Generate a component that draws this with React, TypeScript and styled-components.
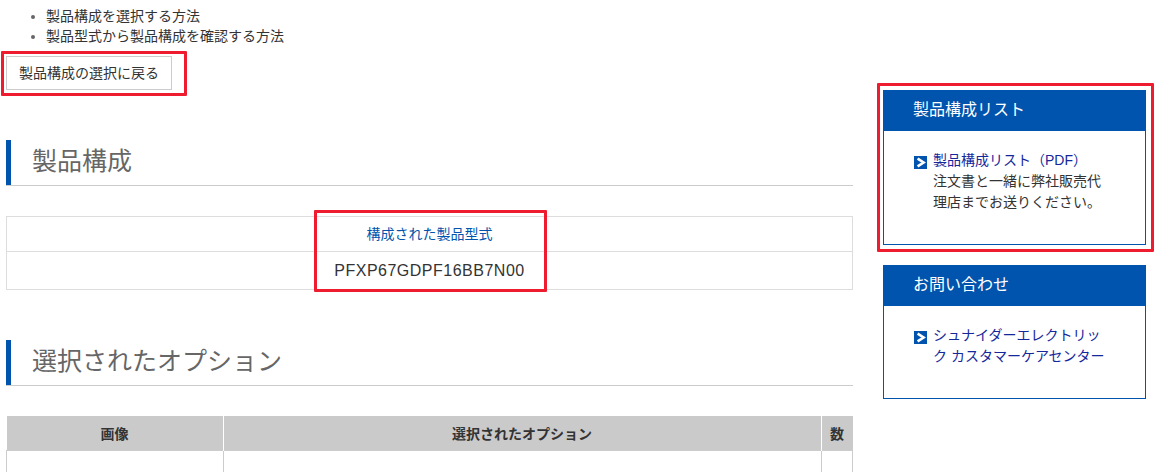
import React from "react";
import styled, { createGlobalStyle } from "styled-components";

const FONT = `"Liberation Sans", "Noto Sans CJK JP", sans-serif`;
const BLUE = "#0054ad";
const RED = "#ee1c2e";

const Global = createGlobalStyle`
  html, body {
    margin: 0;
    height: 472px;
    overflow: hidden;
    background: #ffffff;
  }
  body {
    font-family: ${FONT};
    font-size: 14px;
    color: #333333;
  }
`;

const Page = styled.div`
  display: flex;
  gap: 30px;
  padding-left: 6px;
`;
const Main = styled.main`
  width: 847px;
  flex: none;
  padding-top: 6px;
`;
const Side = styled.aside`
  width: 263px;
  flex: none;
  margin-top: 90px;
  display: flex;
  flex-direction: column;
  gap: 20px;
`;
const Methods = styled.ul`
  margin: 0 0 10px;
  padding-left: 40px;
  line-height: 20px;
  li::marker {
    color: #666666;
  }
`;
const Marked = styled.div<{ $fit?: boolean }>`
  position: relative;
  ${(p) => (p.$fit ? "width: fit-content;" : "")}
`;
const RedFrame = styled.span<{ $t: number; $r: number; $b: number; $l: number }>`
  position: absolute;
  top: ${(p) => p.$t}px;
  right: ${(p) => p.$r}px;
  bottom: ${(p) => p.$b}px;
  left: ${(p) => p.$l}px;
  border: 3px solid ${RED};
  border-radius: 1px;
  pointer-events: none;
`;
const BackButton = styled.a`
  display: block;
  box-sizing: border-box;
  width: 166px;
  height: 34px;
  line-height: 32px;
  text-align: center;
  border: 1px solid #cccccc;
  color: #333333;
`;
const SectionTitle = styled.h2`
  box-sizing: border-box;
  height: 46px;
  margin: 50px 0 30px;
  padding-left: 21px;
  border-left: 5px solid ${BLUE};
  font-size: 25px;
  font-weight: 400;
  line-height: 43px;
  color: #666666;
  position: relative;
  &::after {
    content: "";
    position: absolute;
    left: -5px;
    right: 0;
    bottom: 0;
    height: 1px;
    background: #cccccc;
  }
`;
const ModelTable = styled.div`
  border: 1px solid #dddddd;
  text-align: center;
`;
const ModelLabel = styled.div`
  height: 34px;
  line-height: 34px;
  color: ${BLUE};
  border-bottom: 1px solid #dddddd;
`;
const ModelValue = styled.div`
  height: 37px;
  line-height: 37px;
  font-size: 16px;
  letter-spacing: 0.5px;
`;
const OptionTable = styled.table`
  width: 847px;
  border-collapse: collapse;
  table-layout: fixed;
`;
const HeadCell = styled.th<{ $w?: number }>`
  ${(p) => (p.$w ? `width: ${p.$w}px;` : "")}
  height: 34px;
  padding: 0;
  background: #cacaca;
  border-left: 1px solid #ffffff;
  font-size: 14px;
  font-weight: 700;
  color: #333333;
  &:first-child {
    border-left: 0;
  }
`;
const BodyCell = styled.td`
  height: 80px;
  padding: 0;
  border: 1px solid #cccccc;
`;
const Box = styled.section<{ $h: number }>`
  box-sizing: border-box;
  height: ${(p) => p.$h}px;
  border: 1px solid ${BLUE};
`;
const BoxHead = styled.h3`
  height: 40px;
  margin: 0;
  padding-left: 29px;
  background: ${BLUE};
  color: #ffffff;
  font-size: 16px;
  font-weight: 400;
  line-height: 37px;
`;
const BoxBody = styled.div`
  display: flex;
  gap: 6px;
  padding: 19px 0 0 30px;
  line-height: 21px;
`;
const Arrow = styled.svg`
  flex: none;
  width: 13px;
  height: 13px;
  margin-top: 6px;
`;
const BoxText = styled.div`
  width: 175px;
`;
const BoxLink = styled.a`
  color: #14289c;
`;

const ArrowIcon = () => (
  <Arrow viewBox="0 0 13 13">
    <rect width="13" height="13" fill={BLUE} />
    <path d="M3.6 2.6 L9.6 6.5 L3.6 10.4" fill="none" stroke="#ffffff" strokeWidth="2.6" />
  </Arrow>
);

const App = (): React.JSX.Element => {
  return (
    <Page>
      <Global />
      <Main>
        <Methods>
          <li>製品構成を選択する方法</li>
          <li>製品型式から製品構成を確認する方法</li>
        </Methods>
        <Marked $fit>
          <BackButton>製品構成の選択に戻る</BackButton>
          <RedFrame $t={-5} $r={-15} $b={-6} $l={-5} />
        </Marked>
        <SectionTitle>製品構成</SectionTitle>
        <Marked>
          <ModelTable>
            <ModelLabel>構成された製品型式</ModelLabel>
            <ModelValue>PFXP67GDPF16BB7N00</ModelValue>
          </ModelTable>
          <RedFrame $t={-6} $r={306} $b={-2} $l={308} />
        </Marked>
        <SectionTitle>選択されたオプション</SectionTitle>
        <OptionTable>
          <thead>
            <tr>
              <HeadCell $w={216}>画像</HeadCell>
              <HeadCell>選択されたオプション</HeadCell>
              <HeadCell $w={31}>数</HeadCell>
            </tr>
          </thead>
          <tbody>
            <tr>
              <BodyCell />
              <BodyCell />
              <BodyCell />
            </tr>
          </tbody>
        </OptionTable>
      </Main>
      <Side>
        <Marked>
          <Box $h={155}>
            <BoxHead>製品構成リスト</BoxHead>
            <BoxBody>
              <ArrowIcon />
              <BoxText>
                <BoxLink>製品構成リスト（PDF）</BoxLink>
                <br />
                注文書と一緒に弊社販売代理店までお送りください。
              </BoxText>
            </BoxBody>
          </Box>
          <RedFrame $t={-7} $r={-8} $b={-7} $l={-6} />
        </Marked>
        <Box $h={134}>
          <BoxHead>お問い合わせ</BoxHead>
          <BoxBody>
            <ArrowIcon />
            <BoxText>
              <BoxLink>シュナイダーエレクトリック カスタマーケアセンター</BoxLink>
            </BoxText>
          </BoxBody>
        </Box>
      </Side>
    </Page>
  );
};

export default App;
